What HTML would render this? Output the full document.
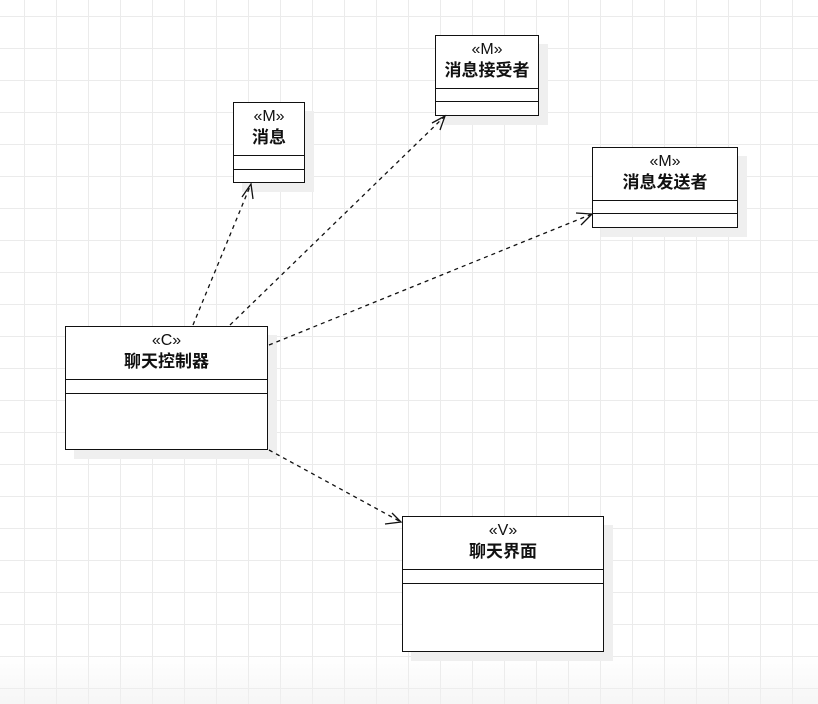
<!DOCTYPE html><html><head><meta charset="utf-8"><style>
body{margin:0;width:818px;height:704px;overflow:hidden;position:relative;font-family:"Liberation Sans","Noto Sans CJK SC",sans-serif;
background:linear-gradient(to bottom,rgba(255,255,255,0) 656px,rgba(240,240,240,0.6) 704px),
linear-gradient(to right,#ebebeb 1px,transparent 1px) 24px 0/32px 32px,
linear-gradient(to bottom,#ebebeb 1px,transparent 1px) 0 16px/32px 32px,#fff;}
.b{position:absolute;background:#fff;border:1.5px solid #111;box-sizing:border-box;box-shadow:9px 9px 0 #efefef;text-align:center;color:#111}
.s{font-size:16px;line-height:18px;margin-top:5px}
.n{font-size:17px;font-weight:bold;line-height:22px;margin-top:1px}
.h{position:absolute;left:0;right:0;border-top:1.5px solid #111}
svg{position:absolute;left:0;top:0}
</style></head><body>
<div class="b" style="left:233px;top:102px;width:72px;height:81px"><div class="s">«M»</div><div class="n">消息</div><div class="h" style="top:52px"></div><div class="h" style="top:66px"></div></div>
<div class="b" style="left:435px;top:35px;width:104px;height:81px"><div class="s">«M»</div><div class="n">消息接受者</div><div class="h" style="top:52px"></div><div class="h" style="top:65px"></div></div>
<div class="b" style="left:592px;top:147px;width:146px;height:81px"><div class="s">«M»</div><div class="n">消息发送者</div><div class="h" style="top:52px"></div><div class="h" style="top:65px"></div></div>
<div class="b" style="left:65px;top:326px;width:203px;height:124px"><div class="s">«C»</div><div class="n">聊天控制器</div><div class="h" style="top:52px"></div><div class="h" style="top:66px"></div></div>
<div class="b" style="left:402px;top:516px;width:202px;height:136px"><div class="s">«V»</div><div class="n">聊天界面</div><div class="h" style="top:52px"></div><div class="h" style="top:66px"></div></div>
<svg width="818" height="704" fill="none" stroke="#111" stroke-width="1.3">
<g stroke-dasharray="4,4">
<line x1="193" y1="325" x2="251" y2="184"/>
<line x1="230" y1="325" x2="445" y2="116"/>
<line x1="269" y1="345" x2="592" y2="214"/>
<line x1="269" y1="450" x2="401" y2="522"/>
</g>
<polyline points="242,197 251,184 253,199"/>
<polyline points="432,123 445,116 440,130"/>
<polyline points="576,213 592,214 581,225"/>
<polyline points="385,524 401,522 392,513"/>
</svg>
</body></html>
